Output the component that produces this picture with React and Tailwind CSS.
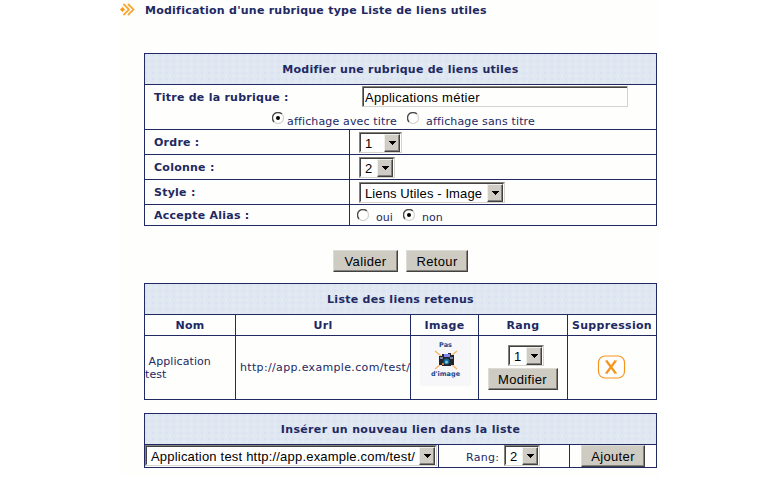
import React from "react";

const bold = "font-bold text-[11px] leading-[13px] whitespace-nowrap text-[#212963]";
const plain = "text-[11px] leading-[13px] whitespace-nowrap text-[#212963]";

function Header({ children, className = "" }) {
  return (
    <div className="flex h-[31px] items-center justify-center border-b border-[#212963] bg-[#dfe7f1] bg-[radial-gradient(circle_at_1px_1px,#d3dafa_0.6px,transparent_0.8px),radial-gradient(circle_at_4px_4px,#f0ecfb_0.6px,transparent_0.8px)] bg-[length:7px_6px]">
      <span className={`${bold} ${className}`}>{children}</span>
    </div>
  );
}

function Select({ children, className }) {
  return (
    <div
      className={`flex h-[21px] shrink-0 border border-t-[#84827b] border-l-[#84827b] border-r-[#d6d3ce] border-b-[#d6d3ce] bg-white ${className}`}
    >
      <div className="flex min-w-0 flex-1 border border-t-[#424142] border-l-[#424142] border-r-white border-b-white">
        <span className="flex-1 pl-1 font-['Liberation_Sans',sans-serif] text-[13px] leading-[19px] whitespace-nowrap text-black">
          {children}
        </span>
        <span className="flex h-[18px] w-4 items-center justify-center border border-t-[#efefea] border-l-[#efefea] border-r-[#424142] border-b-[#424142] bg-[#ceccc4] shadow-[inset_-1px_-1px_0_#84827b]">
          <svg width="7" height="4" viewBox="0 0 7 4" shapeRendering="crispEdges">
            <path d="M0 0H7V1H6V2H5V3H4V4H3V3H2V2H1V1H0Z" fill="#000" />
          </svg>
        </span>
      </div>
    </div>
  );
}

function Button({ children, className }) {
  return (
    <button
      className={`h-[22px] shrink-0 border border-t-[#dedbd6] border-l-[#dedbd6] border-r-[#424142] border-b-[#424142] bg-[#cecbc3] text-center font-['Liberation_Sans',sans-serif] text-[13px] leading-[21px] tracking-[0.35px] text-black shadow-[inset_-1px_-1px_0_#84827b] ${className}`}
    >
      {children}
    </button>
  );
}

function Radio({ checked, className }) {
  return (
    <svg className={`shrink-0 ${className}`} width="12" height="12" viewBox="0 0 12 12">
      <circle cx="6" cy="6" r="5" fill="#fff" />
      <path d="M2.1 9.9A5.4 5.4 0 0 1 9.9 2.1" fill="none" stroke="#4a4a4a" strokeWidth="1.4" />
      <path d="M9.9 2.1A5.4 5.4 0 0 1 2.1 9.9" fill="none" stroke="#d6d3ce" strokeWidth="1.2" />
      {checked && <circle cx="6" cy="6" r="2" fill="#000" />}
    </svg>
  );
}

function Row({ label, height, children }) {
  return (
    <div className={`flex border-b border-[#212963] last:border-b-0 ${height}`}>
      <div className="flex w-[205px] items-center border-r border-[#212963] pl-[9px]">
        <span className={`${bold} tracking-[0.25px]`}>{label}</span>
      </div>
      <div className="flex flex-1 items-center">{children}</div>
    </div>
  );
}

export default function App() {
  return (
    <main className="h-[477px] w-[780px] overflow-hidden bg-white font-['DejaVu_Sans',sans-serif]">
      <div className="ml-[119px] h-full w-[540px] bg-[#fefefd]">
        <div className="flex h-[53px] items-start">
          <svg className="mt-[3px] ml-px shrink-0" width="15" height="14" viewBox="0 0 15 14">
            <path d="M0 6.5L2.5 4L5 6.5L2.5 9Z" fill="#f79a10" />
            <path d="M3.5 1L9 6.5L3.5 12M8 1L13.5 6.5L8 12" fill="none" stroke="#f7a93a" strokeWidth="1.8" />
          </svg>
          <h1 className={`${bold} mt-[4px] ml-[10px] tracking-[0.24px]`}>
            Modification d'une rubrique type Liste de liens utiles
          </h1>
        </div>

        <section className="ml-[25px] h-[173px] w-[513px] border border-[#212963]">
          <Header className="tracking-[0.26px]">Modifier une rubrique de liens utiles</Header>
          <div className="h-[45px] border-b border-[#212963]">
            <div className="flex h-[24px] items-start pl-[9px]">
              <span className={`${bold} mt-[6px] w-[208px] tracking-[0.25px]`}>Titre de la rubrique :</span>
              <div className="mt-px h-[21px] w-[266px] border border-t-[#84827b] border-l-[#84827b] border-r-[#d6d3ce] border-b-[#d6d3ce]">
                <div className="h-[19px] border-t border-l border-[#424142] pl-px font-['Liberation_Sans',sans-serif] text-[13px] leading-[19px] tracking-[0.26px] text-black">
                  Applications métier
                </div>
              </div>
            </div>
            <div className="flex items-start pl-[127px]">
              <Radio checked className="mt-[3px]" />
              <span className={`${plain} mt-[6px] ml-[3px] w-[120px] tracking-[0.15px]`}>affichage avec titre</span>
              <Radio className="mt-[3px]" />
              <span className={`${plain} mt-[6px] ml-[7px] tracking-[0.15px]`}>affichage sans titre</span>
            </div>
          </div>
          <Row label="Ordre :" height="h-[25px]">
            <Select className="ml-[9px] w-[43px]">1</Select>
          </Row>
          <Row label="Colonne :" height="h-[25px]">
            <Select className="ml-[9px] w-[36px]">2</Select>
          </Row>
          <Row label="Style :" height="h-[25px]">
            <Select className="ml-[9px] w-[146px] tracking-[0.11px]">Liens Utiles - Image</Select>
          </Row>
          <Row label="Accepte Alias :" height="h-[20px]">
            <Radio className="ml-[7px]" />
            <span className={`${plain} mt-[5px] ml-[7px] w-[27px]`}>oui</span>
            <Radio checked />
            <span className={`${plain} mt-[5px] ml-[7px]`}>non</span>
          </Row>
        </section>

        <div className="flex h-[57px] gap-2 pt-[24px] pl-[214px]">
          <Button className="w-[65px]">Valider</Button>
          <Button className="w-[62px]">Retour</Button>
        </div>

        <section className="ml-[25px] h-[117px] w-[513px] border border-[#212963]">
          <Header className="tracking-[0.27px]">Liste des liens retenus</Header>
          <div className="grid h-[84px] grid-cols-[91px_175px_68px_89px_88px] grid-rows-[21px_63px]">
            {["Nom", "Url", "Image", "Rang", "Suppression"].map((name) => (
              <div
                key={name}
                className="flex items-center justify-center border-r border-b border-[#212963] nth-[5]:border-r-0"
              >
                <span className={`${bold} tracking-[0.3px]`}>{name}</span>
              </div>
            ))}
            <div className="border-r border-[#212963] pt-[19px]">
              <p className={`${plain} tracking-[0.08px]`}>
                &nbsp;Application
                <br />
                test
              </p>
            </div>
            <div className="flex items-center border-r border-[#212963] pl-[4px]">
              <span className={`${plain} tracking-[0.34px]`}>http://app.example.com/test/</span>
            </div>
            <div className="border-r border-[#212963] pl-[9px]">
              <div className="flex h-[50px] w-[51px] flex-col items-center bg-[#f7f7f9] pt-[5px] text-[6.5px] leading-[9px] font-bold text-[#174a8c]">
                <span>Pas</span>
                <svg width="24" height="20" viewBox="0 0 24 20">
                  <path d="M1 1L23 19M23 1L1 19" stroke="#f6b26b" strokeWidth="1.3" />
                  <path d="M5 6H8V4H10V5H14V3H17V5H20V15H17V16H8V15H5Z" fill="#20252f" />
                  <path d="M10 4H16V7H10Z" fill="#8088ef" />
                  <path d="M6 7H9V9H6ZM16 7H19V9H16Z" fill="#7b8498" />
                  <circle cx="12.5" cy="11.5" r="3" fill="#15678f" />
                  <circle cx="12.5" cy="12" r="1.5" fill="#73cdea" />
                  <path d="M8 13H10V15H8Z" fill="#d67e35" />
                </svg>
                <span>d'image</span>
              </div>
            </div>
            <div className="flex flex-col items-center border-r border-[#212963] pt-[9px]">
              <Select className="ml-[6px] w-[36px]">1</Select>
              <Button className="mt-[2px] mr-px w-[70px]">Modifier</Button>
            </div>
            <div className="pt-[19px] pl-[29px]">
              <svg width="29" height="24" viewBox="0 0 29 24">
                <rect x="1.5" y="1" width="26" height="22" rx="6.5" fill="#fff" stroke="#f7941d" strokeWidth="1.2" />
                <path d="M9.5 6L18.5 18M18.5 6L9.5 18" stroke="#f7941d" strokeWidth="2.2" />
                <path d="M8 6H11M17 6H20M8 18H11M17 18H20" stroke="#f7941d" strokeWidth="1" />
              </svg>
            </div>
          </div>
        </section>

        <section className="mt-[13px] ml-[25px] h-[55px] w-[513px] border border-[#212963]">
          <Header className="tracking-[0.35px]">Insérer un nouveau lien dans la liste</Header>
          <div className="flex h-[22px]">
            <div className="w-[294px] border-r border-[#212963]">
              <Select className="w-[292px] tracking-[0.2px]">Application test http://app.example.com/test/</Select>
            </div>
            <div className="flex w-[131px] border-r border-[#212963] pl-[27px]">
              <span className={`${plain} mt-[6px] w-[38px] tracking-[0.3px]`}>Rang:</span>
              <Select className="w-[36px]">2</Select>
            </div>
            <div className="pl-[11px]">
              <Button className="block w-[64px]">Ajouter</Button>
            </div>
          </div>
        </section>
      </div>
    </main>
  );
}
